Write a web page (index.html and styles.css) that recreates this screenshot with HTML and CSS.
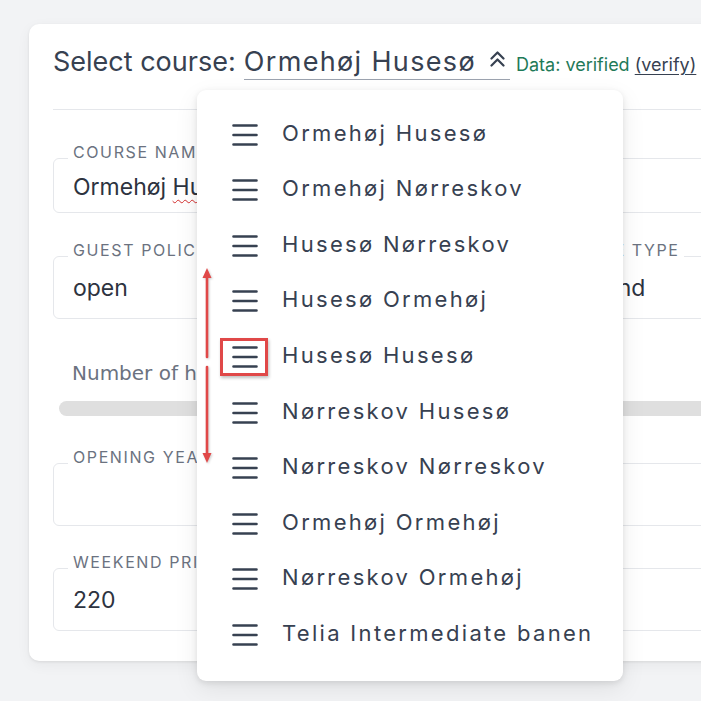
FILE: index.html
```html
<!DOCTYPE html>
<html lang="en">
<head>
<meta charset="utf-8">
<title>Course editor</title>
<link rel="stylesheet" href="styles.css">
</head>
<body>
<div class="page">
  <div class="card">
    <div class="header">
      <span class="header-label">Select course:</span>
      <span class="select">Ormehøj Husesø<svg class="chev" width="17" height="17" viewBox="0 0 17 17"><path d="M2.5 8.5 L8.5 2.5 L14.5 8.5 M2.5 15.5 L8.5 9.5 L14.5 15.5" fill="none" stroke="#374151" stroke-width="2.2" stroke-linecap="round" stroke-linejoin="round"/></svg></span>
      <span class="status">Data: verified <span class="verify">(verify)</span></span>
    </div>
    <div class="divider"></div>

    <fieldset class="field field-first">
      <legend>Course name</legend>
      <div class="value">Ormehøj <span class="typo">Husesø</span></div>
    </fieldset>

    <div class="row-2">
      <fieldset class="field">
        <legend>Guest policy</legend>
        <div class="value">open</div>
      </fieldset>
      <fieldset class="field">
        <legend>Course type</legend>
        <div class="value">Parkland</div>
      </fieldset>
    </div>

    <div class="holes">
      <div class="holes-label">Number of holes</div>
      <div class="track"></div>
    </div>

    <fieldset class="field field-year">
      <legend>Opening year</legend>
      <div class="value">&nbsp;</div>
    </fieldset>

    <fieldset class="field field-price">
      <legend>Weekend price</legend>
      <div class="value">220</div>
    </fieldset>
  </div>

  <div class="dropdown">
    <div class="item"><svg class="grip" width="26" height="22" viewBox="0 0 26 22"><path d="M1.5 1.5 H24.5 M1.5 11 H24.5 M1.5 20.5 H24.5" stroke="#374151" stroke-width="2.6" stroke-linecap="round"/></svg><span>Ormehøj Husesø</span></div>
    <div class="item"><svg class="grip" width="26" height="22" viewBox="0 0 26 22"><path d="M1.5 1.5 H24.5 M1.5 11 H24.5 M1.5 20.5 H24.5" stroke="#374151" stroke-width="2.6" stroke-linecap="round"/></svg><span>Ormehøj Nørreskov</span></div>
    <div class="item"><svg class="grip" width="26" height="22" viewBox="0 0 26 22"><path d="M1.5 1.5 H24.5 M1.5 11 H24.5 M1.5 20.5 H24.5" stroke="#374151" stroke-width="2.6" stroke-linecap="round"/></svg><span>Husesø Nørreskov</span></div>
    <div class="item"><svg class="grip" width="26" height="22" viewBox="0 0 26 22"><path d="M1.5 1.5 H24.5 M1.5 11 H24.5 M1.5 20.5 H24.5" stroke="#374151" stroke-width="2.6" stroke-linecap="round"/></svg><span>Husesø Ormehøj</span></div>
    <div class="item"><svg class="grip" width="26" height="22" viewBox="0 0 26 22"><path d="M1.5 1.5 H24.5 M1.5 11 H24.5 M1.5 20.5 H24.5" stroke="#374151" stroke-width="2.6" stroke-linecap="round"/></svg><span>Husesø Husesø</span></div>
    <div class="item"><svg class="grip" width="26" height="22" viewBox="0 0 26 22"><path d="M1.5 1.5 H24.5 M1.5 11 H24.5 M1.5 20.5 H24.5" stroke="#374151" stroke-width="2.6" stroke-linecap="round"/></svg><span>Nørreskov Husesø</span></div>
    <div class="item"><svg class="grip" width="26" height="22" viewBox="0 0 26 22"><path d="M1.5 1.5 H24.5 M1.5 11 H24.5 M1.5 20.5 H24.5" stroke="#374151" stroke-width="2.6" stroke-linecap="round"/></svg><span>Nørreskov Nørreskov</span></div>
    <div class="item"><svg class="grip" width="26" height="22" viewBox="0 0 26 22"><path d="M1.5 1.5 H24.5 M1.5 11 H24.5 M1.5 20.5 H24.5" stroke="#374151" stroke-width="2.6" stroke-linecap="round"/></svg><span>Ormehøj Ormehøj</span></div>
    <div class="item"><svg class="grip" width="26" height="22" viewBox="0 0 26 22"><path d="M1.5 1.5 H24.5 M1.5 11 H24.5 M1.5 20.5 H24.5" stroke="#374151" stroke-width="2.6" stroke-linecap="round"/></svg><span>Nørreskov Ormehøj</span></div>
    <div class="item"><svg class="grip" width="26" height="22" viewBox="0 0 26 22"><path d="M1.5 1.5 H24.5 M1.5 11 H24.5 M1.5 20.5 H24.5" stroke="#374151" stroke-width="2.6" stroke-linecap="round"/></svg><span>Telia Intermediate banen</span></div>

    <div class="highlight"></div>
    <svg class="arrows" width="20" height="215" viewBox="0 0 20 215">
      <line x1="10" y1="16" x2="10" y2="97" stroke="#e04848" stroke-width="2.6" stroke-linecap="round"/>
      <polygon points="10,8 5.5,18 14.5,18" fill="#e04848"/>
      <line x1="10" y1="107" x2="10" y2="195" stroke="#e04848" stroke-width="2.6" stroke-linecap="round"/>
      <polygon points="10,203 5.5,193 14.5,193" fill="#e04848"/>
    </svg>
  </div>
</div>
</body>
</html>
```

FILE: styles.css
```css
html {
  overflow: hidden;
}

body {
  margin: 0;
  padding: 0;
  background: #f2f3f5;
  font-family: Inter, "Noto Sans", sans-serif;
  color: #374151;
}

.page {
  position: relative;
  padding: 24px 0 60px 29px;
  width: 1100px;
}

.card {
  width: 934px;
  background: #fff;
  border-radius: 10px;
  box-shadow: 0 1px 3px rgba(0, 0, 0, 0.08), 0 4px 14px rgba(0, 0, 0, 0.05);
  padding: 18px 24px 30px 24px;
}

.header {
  display: flex;
  align-items: baseline;
  height: 40px;
  font-size: 27px;
  line-height: 40px;
  white-space: nowrap;
}

.header-label {
  margin-right: 8px;
}

.select {
  display: inline-block;
  line-height: 34px;
  letter-spacing: 0.05em;
  border-bottom: 1px solid #9ca3af;
  padding-right: 4px;
}

.chev {
  vertical-align: 4px;
  margin-left: 13px;
}

.status {
  margin-left: 6px;
  font-size: 18px;
  color: #1f7a58;
}

.verify {
  color: #374151;
  text-decoration: underline;
  text-underline-offset: 3px;
}

.divider {
  margin-top: 27px;
  border-top: 1px solid #e5e7eb;
}

.field {
  margin: 0;
  border: 1px solid #e5e7eb;
  border-radius: 6px;
  padding: 0 19px 14px 19px;
  min-width: 0;
}

.field legend {
  margin-left: -5px;
  padding: 0 5px 12px 5px;
  font-size: 16px;
  line-height: 20px;
  letter-spacing: 0.1em;
  text-transform: uppercase;
  color: #6b7280;
}

.value {
  font-size: 23px;
  line-height: 32px;
  color: #2d3340;
  white-space: nowrap;
}

.field-first {
  margin-top: 32px;
  padding-bottom: 12px;
}

.field-first .value {
  line-height: 26px;
}

.typo {
  text-decoration: underline wavy #d32f2f;
  text-decoration-thickness: 1px;
  text-underline-offset: 4px;
}

.row-2 {
  display: grid;
  grid-template-columns: 457px 457px;
  column-gap: 20px;
  margin-top: 27px;
}

.holes {
  margin-top: 42px;
}

.holes-label {
  font-family: "DejaVu Sans", sans-serif;
  font-size: 20px;
  line-height: 24px;
  color: #6b7280;
  padding-left: 19px;
}

.track {
  margin-top: 16px;
  margin-left: 6px;
  height: 15px;
  border-radius: 8px;
  background: #dfdfdf;
}

.field-year {
  margin-top: 31px;
}

.field-price {
  margin-top: 26px;
}

.dropdown {
  position: absolute;
  left: 197px;
  top: 90px;
  width: 426px;
  box-sizing: border-box;
  padding: 15px 0 21px 0;
  background: #fff;
  border-radius: 9px;
  box-shadow: 0 2px 6px rgba(0, 0, 0, 0.1), 0 8px 24px rgba(0, 0, 0, 0.08);
}

.item {
  display: flex;
  align-items: center;
  gap: 24px;
  height: 55.55px;
  padding-left: 35px;
  font-size: 22px;
  letter-spacing: 0.105em;
  color: #374151;
  white-space: nowrap;
}

.grip {
  flex: none;
  margin-top: 4px;
}

.highlight {
  position: absolute;
  left: 23px;
  top: 248px;
  width: 48px;
  height: 38px;
  box-sizing: border-box;
  border: 3px solid #e04848;
  box-shadow: 1px 2px 3px rgba(0, 0, 0, 0.25);
}

.arrows {
  position: absolute;
  left: 0;
  top: 170px;
  filter: drop-shadow(1px 1px 1px rgba(0, 0, 0, 0.2));
}
```
